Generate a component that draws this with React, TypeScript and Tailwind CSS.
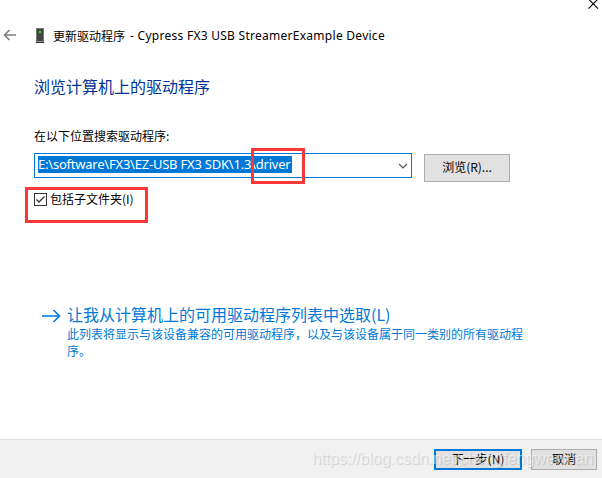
const latin = "font-['Noto_Sans','Noto_Sans_CJK_SC',sans-serif]";
const zh = "font-['Noto_Sans_CJK_SC',sans-serif]";

function TitleBar() {
  return (
    <header className="h-[48px]">
      <div className="flex h-[10px] justify-end">
        <svg width="14" height="10" viewBox="0 0 14 10" stroke="#000" strokeWidth="1.1" fill="none">
          <path d="M0.5 -1 L10 8.7 M10 -1 L0.5 8.7" />
        </svg>
      </div>
      <div className="flex h-[38px] items-start pl-[3px] pt-[17px]">
        <svg className="mt-[2px]" width="14" height="12" viewBox="0 0 14 12" stroke="#808080" strokeWidth="1.7" fill="none">
          <path d="M13 6 H2 M6.5 1 L1.5 6 L6.5 11" />
        </svg>
        <svg className="ml-[18px] mt-px" width="10" height="16" viewBox="0 0 10 16">
          <rect x="1" y="0" width="8" height="14" fill="#777" />
          <rect x="2" y="1" width="6" height="12" fill="#444" />
          <rect x="4" y="3" width="2" height="2" fill="#1bf01b" />
          <rect x="2" y="13" width="6" height="1" fill="#999" />
          <rect x="1" y="14" width="8" height="1" fill="#333" />
        </svg>
        <div className={`${zh} ml-[8px] flex text-[12px] leading-[18px] text-black whitespace-pre`}>
          <span>更新驱动程序</span>
          <span className={`${latin} ml-[5px] text-[12px] tracking-[0.27px]`}>- Cypress FX3 USB StreamerExample Device</span>
        </div>
      </div>
    </header>
  );
}

function PathField() {
  return (
    <div className="flex items-start">
      <div className="relative flex h-[25px] w-[378px] items-start justify-between border border-[#0078d7] bg-white pl-[3px] pt-[2px]">
        <span className={`${latin} h-[17px] w-[254px] bg-[#0078d7] text-[13px] leading-[17px] tracking-[-0.22px] text-white whitespace-nowrap`}>
          E:\software\FX3\EZ-USB FX3 SDK\1.3\driver
        </span>
        <svg className="mr-[3px] mt-[7px]" width="10" height="7" viewBox="0 0 10 7" stroke="#555" strokeWidth="1.2" fill="none">
          <path d="M1 1 L5 5 L9 1" />
        </svg>
        <div className="absolute left-[216px] top-[-6px] h-[36px] w-[54px] border-[3px] border-[#fb3838]" />
      </div>
      <button className={`${zh} ml-[12px] mt-px flex h-[28px] w-[86px] items-center justify-center border border-[#adadad] bg-[#e1e1e1] pb-[2px] text-[12px] text-black`}>
        浏览(R)...
      </button>
    </div>
  );
}

export default function App() {
  return (
    <main className="relative flex h-[478px] w-[602px] flex-col overflow-hidden bg-white">
      <TitleBar />
      <section className="flex-1 pl-[34px]">
        <h1 className={`${zh} mt-[26px] text-[16px] leading-[24px] text-[#003399]`}>浏览计算机上的驱动程序</h1>
        <p className={`${zh} mt-[29px] text-[12px] leading-[18px] text-black`}>在以下位置搜索驱动程序:</p>
        <div className="mt-[8px]">
          <PathField />
        </div>
        <div className="-ml-[9px] mt-[5px] flex h-[36px] w-[123px] items-start border-[3px] border-[#fb3838] pl-[6px] pt-[3px]">
          <svg width="13" height="13" viewBox="0 0 13 13" fill="none" stroke="#333">
            <rect x="0.5" y="0.5" width="12" height="12" />
            <path d="M2.5 6.5 L5 9 L10.5 3.5" strokeWidth="1.3" />
          </svg>
          <span className={`${zh} ml-[3px] -mt-[3px] text-[12px] leading-[18px] text-black`}>包括子文件夹(I)</span>
        </div>
        <div className="mt-[79px] flex items-start pl-[8px] text-[#0078d7]">
          <svg className="mt-[7px]" width="19" height="14" viewBox="0 0 19 14" stroke="currentColor" strokeWidth="1.6" fill="none">
            <path d="M0 7 H17 M11.5 1 L17.5 7 L11.5 13" />
          </svg>
          <div className={`${zh} ml-[6px] w-[462px]`}>
            <div className="text-[16px] leading-[24px]">让我从计算机上的可用驱动程序列表中选取(L)</div>
            <p className="-mt-px text-[12px] leading-[17px]">此列表将显示与该设备兼容的可用驱动程序，以及与该设备属于同一类别的所有驱动程序。</p>
          </div>
        </div>
      </section>
      <footer className="flex h-[39px] items-start justify-end gap-[9px] border-t border-[#dfdfdf] bg-[#f0f0f0] pr-[5px] pt-[9px]">
        <button className={`${zh} flex h-[21px] w-[88px] items-center justify-center border-2 border-[#0078d7] bg-[#e1e1e1] pb-px text-[12px] text-black`}>下一步(N)</button>
        <button className={`${zh} flex h-[21px] w-[66px] items-center justify-center border border-[#adadad] bg-[#e1e1e1] pb-px text-[12px] text-black`}>取消</button>
      </footer>
      <div className="absolute left-[312px] top-[449px] whitespace-nowrap font-['Liberation_Sans',sans-serif] text-[16px] leading-[20px] text-white/50 [text-shadow:1px_1px_1px_rgba(0,0,0,0.14)]">
        https://blog.csdn.net/chengfengwenxian
      </div>
    </main>
  );
}
